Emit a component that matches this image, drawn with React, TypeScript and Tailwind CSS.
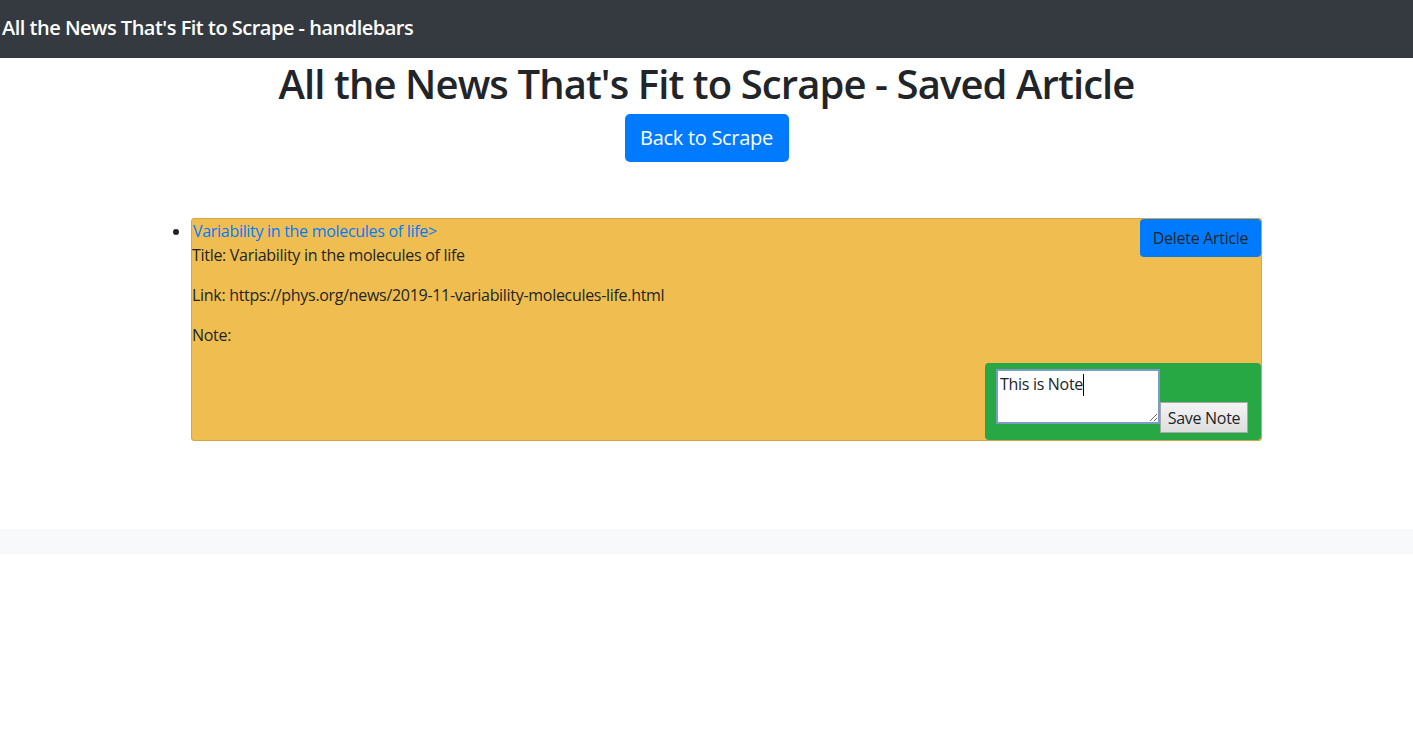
import { useState } from "react";

const FONT = "font-['Open_Sans','Noto_Sans',sans-serif]";

function NoteBox() {
  const [note, setNote] = useState("This is Note");
  return (
    <div className="ml-auto flex h-[77px] w-[276px] rounded-[4px] bg-[#28a745] pl-[11px] pr-[13px] pt-[6px] pb-[7px]">
      <div className="relative self-start">
        <textarea
          value={note}
          onChange={(e) => setNote(e.target.value)}
          className="block h-[55px] w-[164px] resize border-2 border-[#7a9cc6] bg-white px-[2px] pt-[4px] text-[16px] leading-[1.2] tracking-[-0.3px] text-[#212529] outline-none"
        />
        {/* text caret */}
        <span className="pointer-events-none absolute left-[87px] top-[5px] h-[22px] w-px bg-black" />
      </div>
      <button className="self-end h-[31px] w-[88px] border border-[#a8a8a8] bg-gradient-to-b from-[#f4f4f4] to-[#dedede] text-[16px] tracking-[-0.3px] text-[#212529]">
        Save Note
      </button>
    </div>
  );
}

export default function App() {
  return (
    <div className={`${FONT} min-h-[746px] bg-white text-[#212529]`}>
      <nav className="flex h-[58px] items-center bg-[#343a40] pb-[2px] pl-[2px]">
        <span className="text-[20px] font-semibold tracking-[-0.5px] text-white">
          All the News That's Fit to Scrape - handlebars
        </span>
      </nav>

      <div className="mx-auto w-[1141px] px-[15px]">
        <div className="text-center">
          <h1 className="mb-[6px] pt-[2px] text-[40px] font-semibold leading-[48px] tracking-[-0.9px]">
            All the News That's Fit to Scrape - Saved Article
          </h1>
          <button className="h-[48px] w-[164px] rounded-[5px] bg-[#007bff] text-[20px] tracking-[-0.3px] text-white">
            Back to Scrape
          </button>
        </div>

        <ul className="mt-[56px] mb-[16px] list-disc pl-[40px] text-[16px] leading-[24px] tracking-[-0.3px]">
          <li className="rounded-[3px] border border-[#d3a648] bg-[#f0be50]">
            <div className="flex items-start justify-between">
              <div>
                <a href="#" className="block pl-[1px] text-[#007bff]">
                  Variability in the molecules of life&gt;
                </a>
                <p className="mb-[16px]">Title: Variability in the molecules of life</p>
                <p className="mb-[16px]">Link: https://phys.org/news/2019-11-variability-molecules-life.html</p>
                <p className="mb-[16px]">Note:</p>
              </div>
              <button className="h-[38px] w-[121px] rounded-[4px] bg-[#007bff] text-[16px] text-[#212529]">
                Delete Article
              </button>
            </div>
            <NoteBox />
          </li>
        </ul>
      </div>

      <div className="mt-[88px] h-[25px] w-full bg-[#f8f9fa]" />
    </div>
  );
}
